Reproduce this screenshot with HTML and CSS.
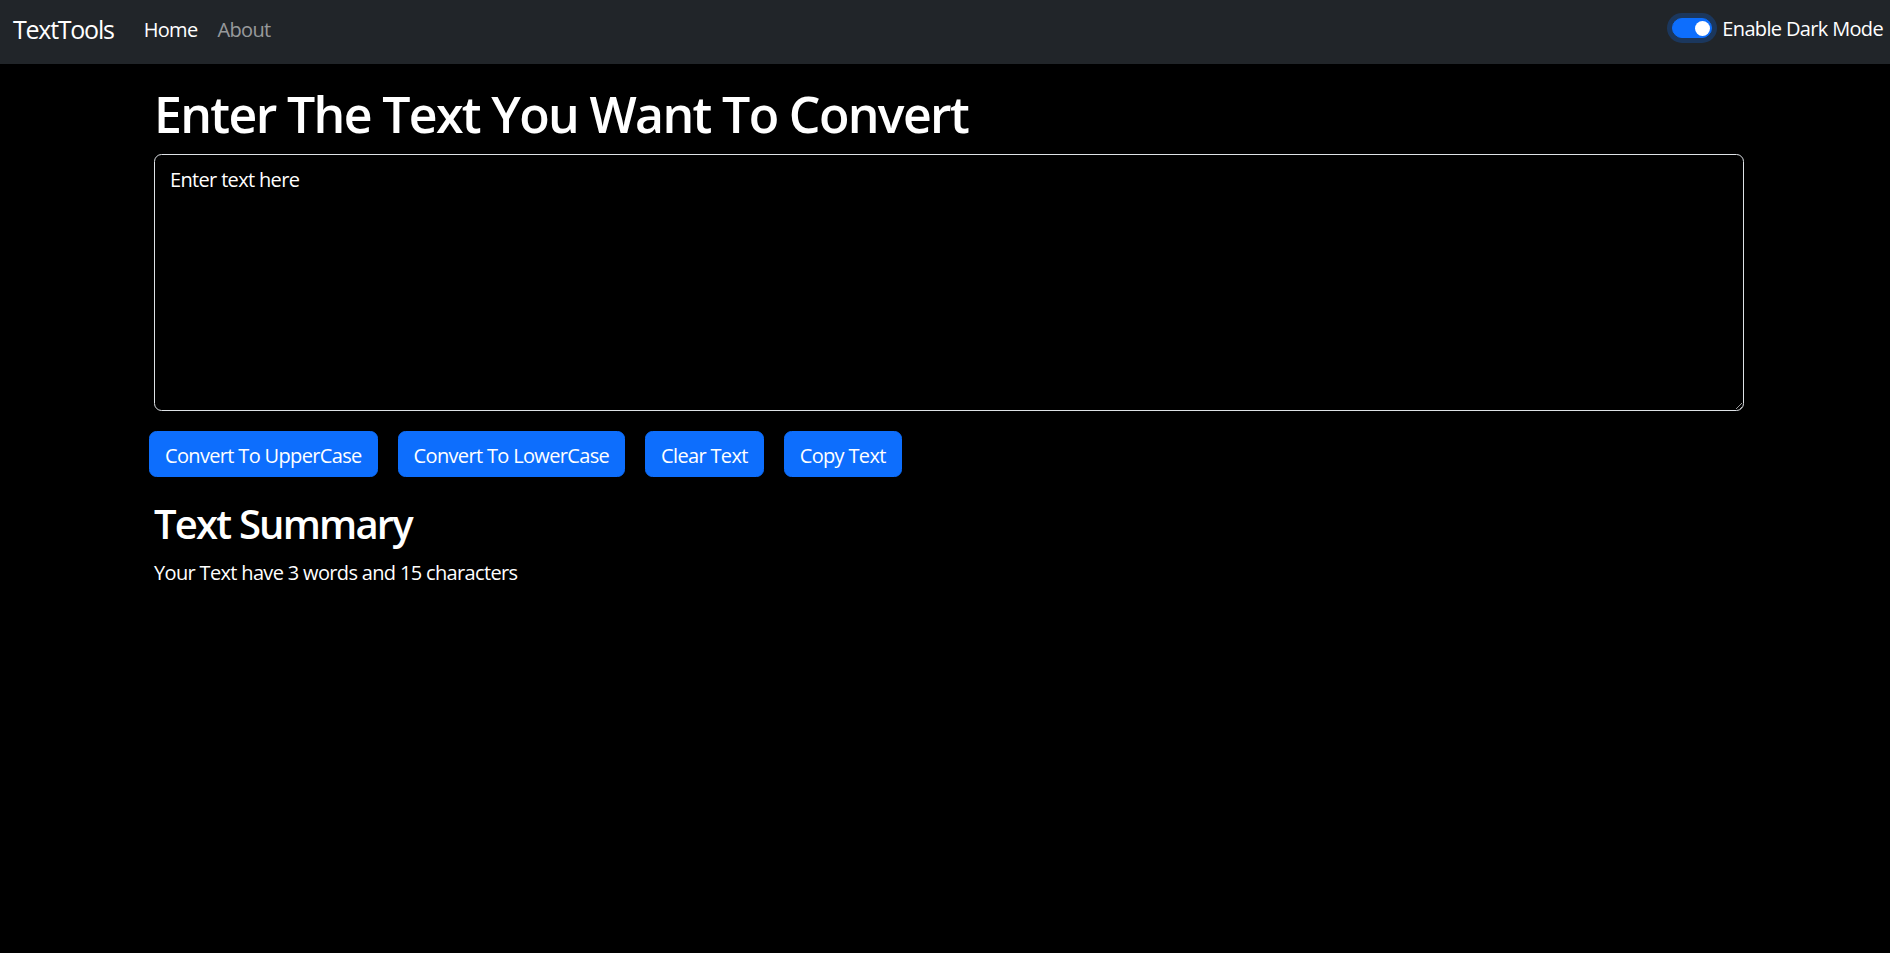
FILE: index.html
```html
<!DOCTYPE html>
<html lang="en">
<head>
<meta charset="utf-8">
<title>TextTools</title>
<link rel="stylesheet" href="styles.css">
</head>
<body>
<nav class="navbar">
  <a class="brand" href="#">TextTools</a>
  <ul class="nav-links">
    <li><a class="nav-link active" href="#">Home</a></li>
    <li><a class="nav-link" href="#">About</a></li>
  </ul>
  <label class="mode-switch">
    <input class="switch-input" type="checkbox" checked>
    <span class="switch-label">Enable Dark Mode</span>
  </label>
</nav>
<main class="container">
  <h1 class="title">Enter The Text You Want To Convert</h1>
  <textarea class="text-box" rows="8">Enter text here</textarea>
  <div class="actions">
    <button class="btn">Convert To UpperCase</button>
    <button class="btn">Convert To LowerCase</button>
    <button class="btn">Clear Text</button>
    <button class="btn">Copy Text</button>
  </div>
  <h2 class="subtitle">Text Summary</h2>
  <p class="summary">Your Text have 3 words and 15 characters</p>
</main>
</body>
</html>
```
FILE: styles.css
```css
* { box-sizing: border-box; }
html, body { margin: 0; padding: 0; }
body {
  background: #000;
  color: #fff;
  font-family: "Open Sans", "Noto Sans", sans-serif;
  font-size: 20px;
  line-height: 30px;
  letter-spacing: -0.033em;
}
.navbar {
  height: 64px;
  background: #212529;
  display: flex;
  align-items: center;
  padding: 0 7px 5px 13px;
}
.brand {
  color: #fff;
  text-decoration: none;
  font-size: 25px;
  line-height: 37px;
  letter-spacing: -0.05em;
  margin-right: 20px;
}
.nav-links {
  list-style: none;
  margin: 0;
  padding: 0;
  display: flex;
}
.nav-link {
  display: block;
  padding: 0 10px;
  color: rgba(255,255,255,.55);
  text-decoration: none;
}
.nav-link.active { color: #fff; }
.mode-switch {
  margin-left: auto;
  display: flex;
  align-items: center;
  gap: 10px;
}
.switch-input {
  appearance: none;
  -webkit-appearance: none;
  margin: 0 0 3px 0;
  width: 40px;
  height: 20px;
  border-radius: 10px;
  background: #0d6efd;
  border: 1px solid #0d6efd;
  box-shadow: 0 0 0 5px rgba(13,110,253,.25);
  position: relative;
}
.switch-input::after {
  content: "";
  position: absolute;
  top: 1.5px;
  right: 1.5px;
  width: 15px;
  height: 15px;
  border-radius: 50%;
  background: #fff;
}
.switch-label { margin-bottom: 2px; }
.container {
  padding: 20px 146px 0 154px;
}
.title {
  font-size: 50px;
  line-height: 60px;
  font-weight: 600;
  letter-spacing: -0.033em;
  margin: 0 0 10px;
}
.text-box {
  display: block;
  width: 100%;
  height: 257px;
  background: #000;
  color: #fff;
  border: 1px solid #dee2e6;
  border-radius: 7.5px;
  padding: 9.5px 15px 5.5px;
  font: inherit;
  line-height: 30px;
  letter-spacing: -0.033em;
}
.actions {
  display: flex;
  gap: 20px;
  margin: 20px 0 0 -5px;
}
.btn {
  height: 46px;
  background: #0d6efd;
  color: #fff;
  border: 1px solid #0d6efd;
  border-radius: 7.5px;
  padding: 9px 15px 5px;
  font: inherit;
  line-height: 30px;
  letter-spacing: -0.033em;
}
.subtitle {
  font-size: 40px;
  line-height: 48px;
  font-weight: 600;
  letter-spacing: -0.045em;
  margin: 23px 0 10px;
}
.summary { margin: 0; }
```
